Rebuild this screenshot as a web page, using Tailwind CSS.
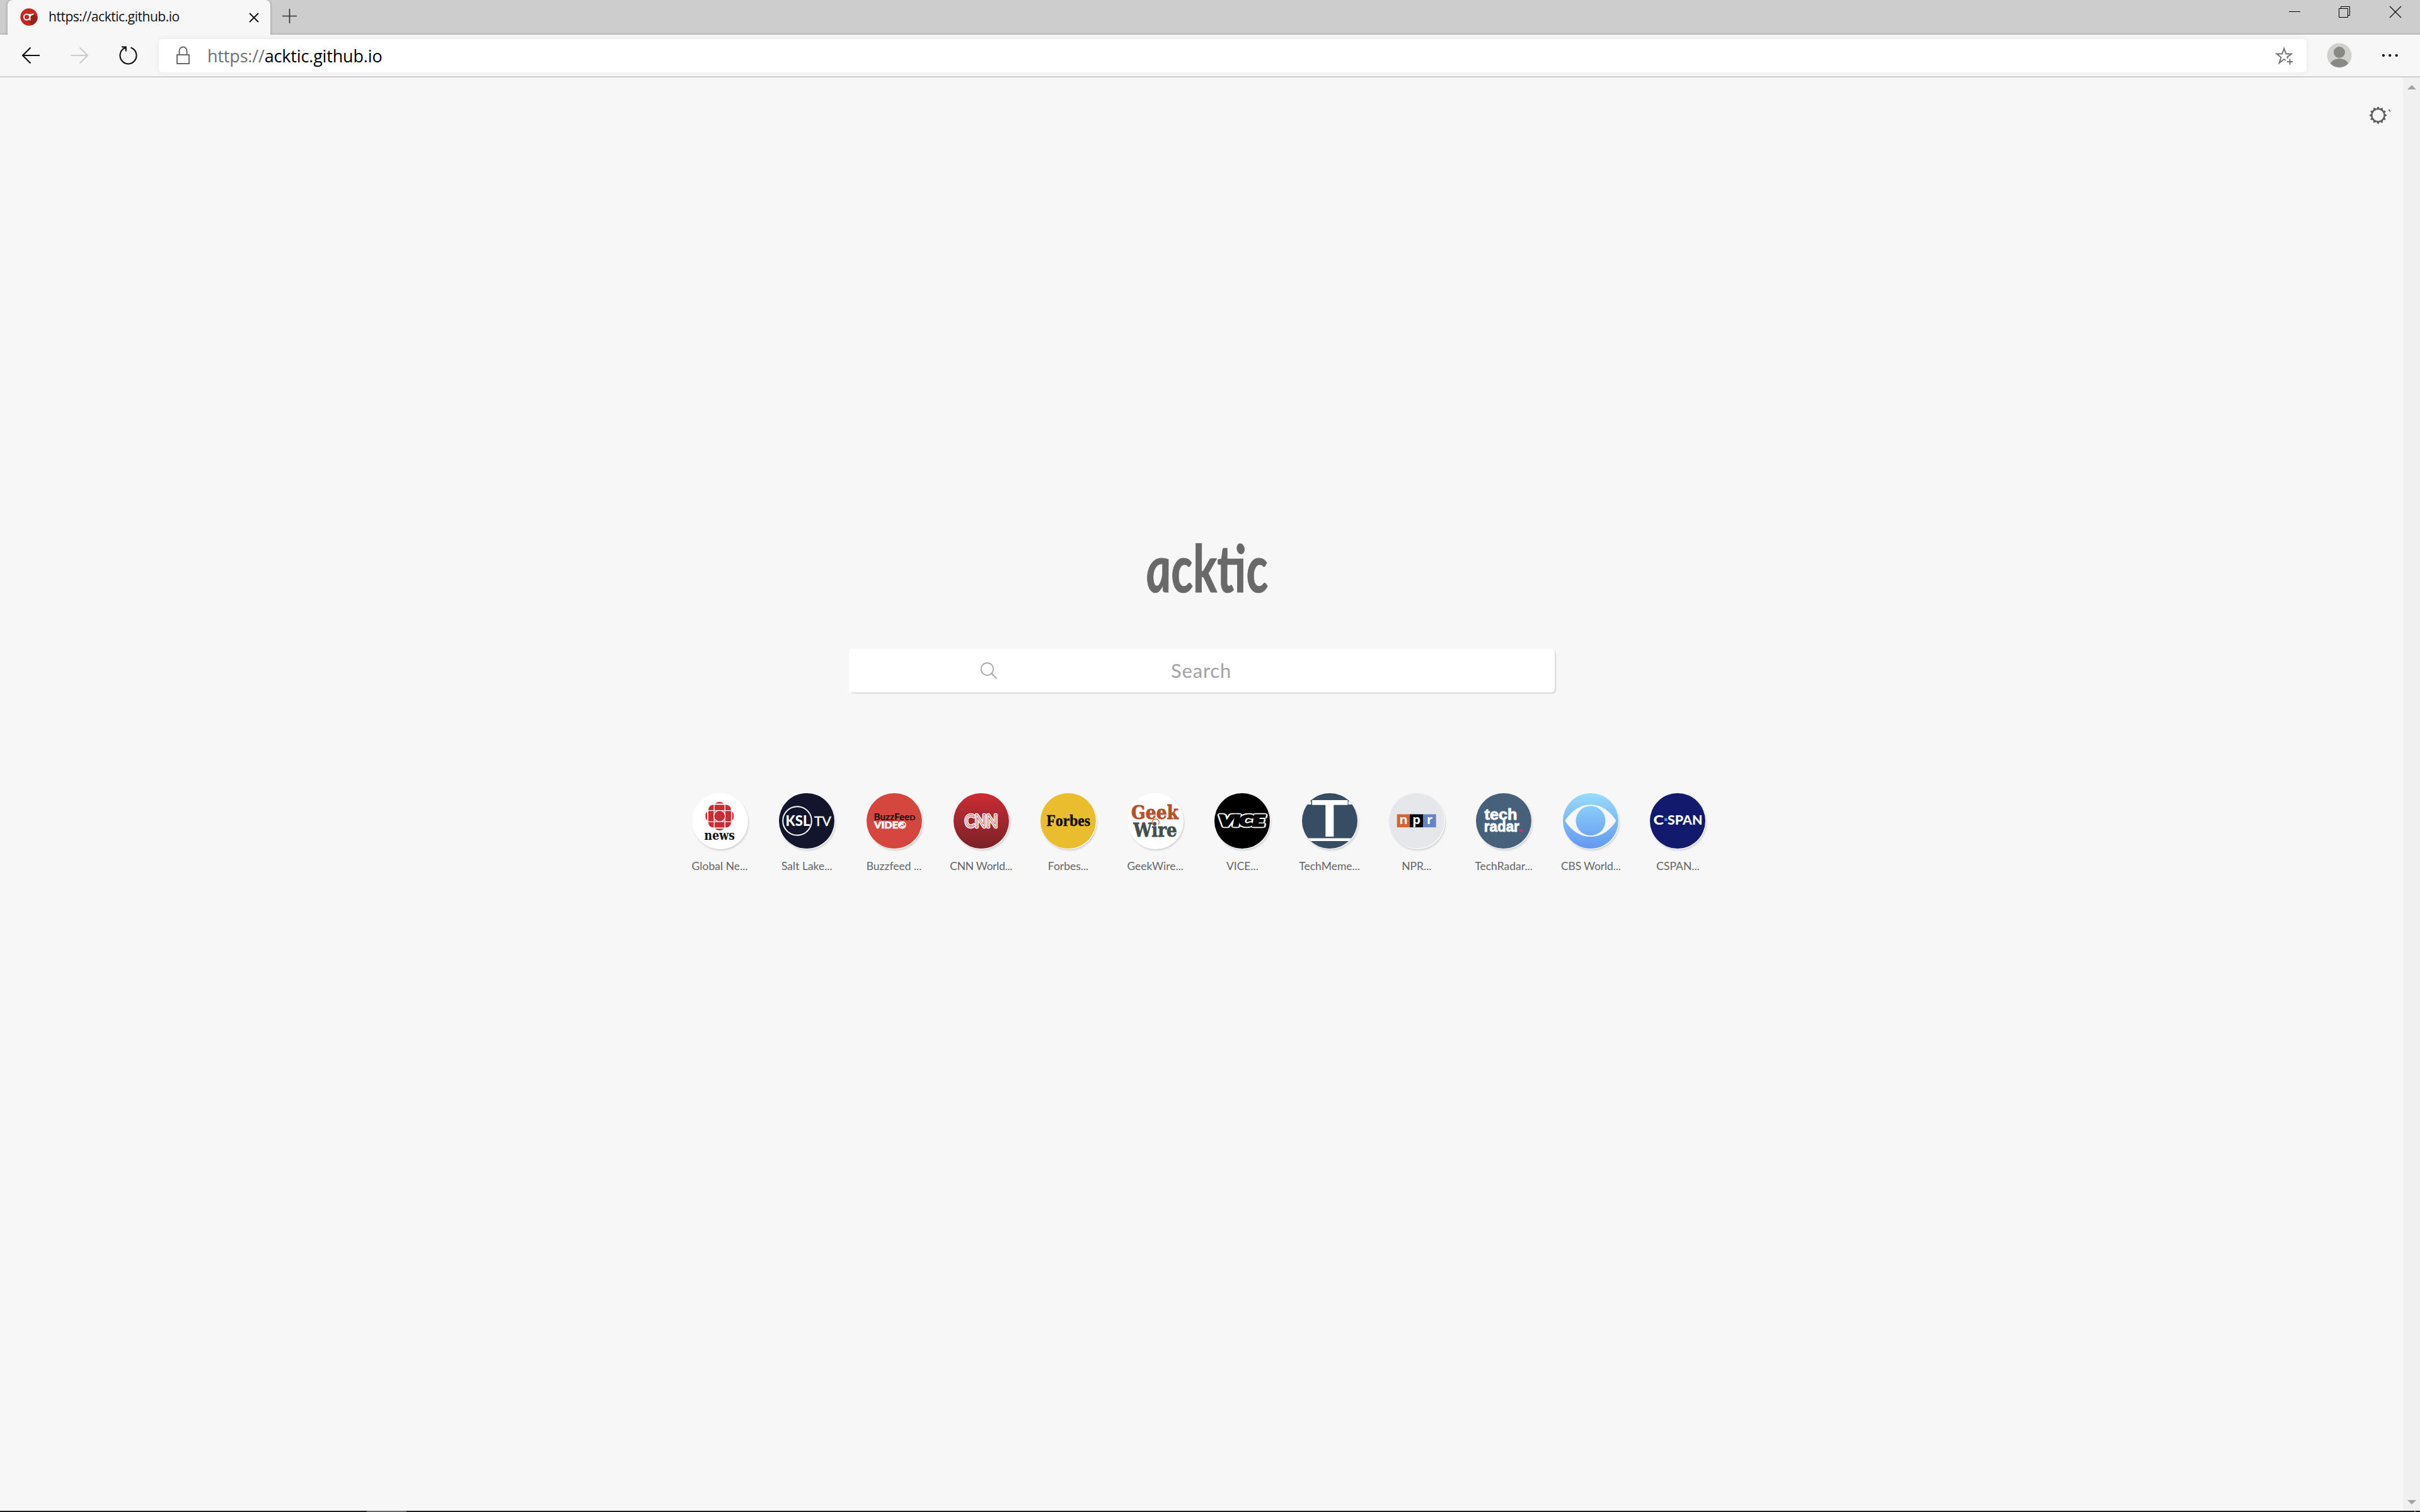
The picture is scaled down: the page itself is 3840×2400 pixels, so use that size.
<!DOCTYPE html>
<html lang="en">
<head>
<meta charset="utf-8">
<title>https://acktic.github.io</title>
<script src="https://cdn.jsdelivr.net/npm/@tailwindcss/browser@4"></script>
</head>
<body class="w-[3840px] h-[2400px] overflow-hidden bg-[#f7f7f7] flex flex-col font-['Open_Sans',sans-serif]">
<!-- tab strip -->
<header class="relative h-[55px] shrink-0 bg-[#cdcdcd] flex items-start shadow-[inset_0_-3px_2px_-1px_#b9b9b9]">
  <div class="ml-3 w-[417px] h-[55px] bg-[#f7f7f7] rounded-t-lg flex items-center pl-5 pr-[17px] shadow-[0_0_4px_rgba(0,0,0,.3)]">
    <svg class="size-7 shrink-0 -mt-px" viewBox="0 0 28 28"><defs><clipPath id="fc"><circle cx="14" cy="14" r="13.7"/></clipPath></defs><circle cx="14" cy="14" r="13.7" fill="#cb2722"/><path d="M10 18L22 9L30 17V30H22Z" fill="#96201d" clip-path="url(#fc)"/><g fill="none" stroke="#fff" stroke-width="2"><circle cx="10.500" cy="14" r="4.600"/><path d="M15.500 9V19.500M15.500 14Q16 9.500 21.500 9.500"/></g></svg>
    <span class="ml-[17px] -mt-[3px] text-[21px] leading-7 tracking-[-.47px] whitespace-nowrap text-[#111]">https://acktic.github.io</span>
    <svg class="ml-auto size-[18px] shrink-0" viewBox="0 0 18 18" stroke="#111" stroke-width="1.900"><path d="M2 2L16 16M16 2L2 16"/></svg>
  </div>
  <svg class="ml-[18px] mt-[13px] size-[25px]" viewBox="0 0 25 25" stroke="#333" stroke-width="1.700"><path d="M1 12.500H24M12.500 1V24"/></svg>
  <div class="ml-auto flex pt-[9px] pr-[29px]">
    <svg class="size-5 mr-[59px]" viewBox="0 0 20 20"><path d="M1 9.500H19" stroke="#000"/></svg>
    <svg class="size-5 mr-[61px]" viewBox="0 0 20 20" fill="none" stroke="#000"><path d="M1.500 4.500H15.500V18.500H1.500ZM4.500 4V1.500H18.500V15.500H16"/></svg>
    <svg class="size-5" viewBox="0 0 20 20" stroke="#000" stroke-width="1.100"><path d="M1 1L19 19M19 1L1 19"/></svg>
  </div>
</header>
<!-- navigation bar -->
<nav class="relative h-[68px] shrink-0 bg-[#f7f7f7] border-b-2 border-[#cfcfcf] flex items-center">
  <svg class="ml-[34px] w-[30px] h-[30px] -mt-px" viewBox="0 0 30 30" fill="none" stroke="#111" stroke-width="2.100"><path d="M29 15H2M14.500 2.500L2 15L14.500 27.500"/></svg>
  <svg class="ml-[47px] w-[30px] h-[30px] -mt-px" viewBox="0 0 30 30" fill="none" stroke="#ccc" stroke-width="2.100"><path d="M1 15H28M15.500 2.500L28 15L15.500 27.500"/></svg>
  <svg class="ml-[48px] w-[30px] h-[32px] -mt-px" viewBox="0 0 30 32" fill="none" stroke="#111" stroke-width="2.100"><path d="M18.500 3.500A13 13.300 0 1 1 10.500 3.500M4 2.500H10.800V9.500"/></svg>
  <div class="ml-[33px] w-[3408px] h-[53px] rounded-[6px] bg-white shadow-[0_0_10px_rgba(0,0,0,.07)] flex items-center">
    <svg class="ml-[27px] w-[23px] h-[30px]" viewBox="0 0 23 30" fill="none" stroke="#6b6b6b" stroke-width="2"><path d="M2 14H21V28H2ZM5.500 14V8A6 6.500 0 0 1 17.500 8V14"/></svg>
    <span class="ml-[27px] mt-[2px] text-[27px] leading-9 tracking-[-.17px] whitespace-nowrap text-black"><span class="text-[#707070]">https://</span>acktic.github.io</span>
    <svg class="ml-auto mr-[21px] size-[29px]" viewBox="0 0 29 29" fill="none" stroke="#757575" stroke-width="2"><path d="M17 22L14.300 20L6.700 26L9.500 17L2.500 11.500H11.300L14.300 3L17.300 11.500H26L19.500 16.500L20 19M19 24H28M23.500 19.500V28.500"/></svg>
  </div>
  <svg class="ml-8 size-10" viewBox="0 0 40 40"><defs><clipPath id="av"><circle cx="20" cy="20" r="19"/></clipPath></defs><circle cx="20" cy="20" r="19.500" fill="#d0d0cd"/><g fill="#888886" clip-path="url(#av)"><circle cx="20" cy="15" r="9"/><ellipse cx="20" cy="37" rx="15" ry="12"/></g></svg>
  <svg class="ml-[46px] w-7 h-3" viewBox="0 0 28 12"><circle cx="4" cy="6" r="2.100"/><circle cx="14.300" cy="6" r="2.100"/><circle cx="24.700" cy="6" r="2.100"/></svg>
</nav>
<!-- page -->
<div class="flex-1 min-h-0 flex">
  <main class="relative flex-1 flex flex-col">
    <button class="absolute right-[18px] top-[45px] flex">
      <svg class="w-[36px] h-[30px]" viewBox="0 0 36 30" fill="#5f5f5f"><path fill-rule="evenodd" d="M14.500 .8L17.300 4.500L21.600 2.700L22.300 7.200L26.800 7.900L25 12.200L28.700 15L25 17.800L26.800 22.100L22.300 22.800L21.600 27.300L17.300 25.500L14.500 29.200L11.700 25.500L7.400 27.300L6.700 22.800L2.200 22.100L4 17.800L.3 15L4 12.200L2.200 7.900L6.700 7.200L7.400 2.700L11.700 4.500ZM14.500 6A9 9 0 1 0 14.500 24A9 9 0 1 0 14.500 6Z"/><path d="M30 6H33L34.500 10.500Z"/></svg>
    </button>
    <h1 class="mt-[733px] ml-[1803px]"><svg class="w-[226px] h-[96px] overflow-visible" viewBox="0 0 226 96"><text transform="translate(18 84) skewX(5)" x="0" y="0" textLength="194" lengthAdjust="spacingAndGlyphs" font-family="Lato" font-weight="700" font-style="italic" font-size="104" fill="#696969" stroke="#696969" stroke-width="1">acktic</text></svg></h1>
    <div class="ml-[1347px] mt-[78px] w-[1120px] h-[69px] bg-white rounded-[6px] shadow-[2px_2px_2px_rgba(0,0,0,.12)] flex items-center font-['Lato',sans-serif]">
      <svg class="ml-[208px] -mt-[2px] w-[28px] h-[28px]" viewBox="0 0 28 28" fill="none" stroke="#aaa" stroke-width="1.900"><circle cx="11.500" cy="12" r="9.700"/><path d="M18.500 19.500L26.500 27" stroke-width="2.300"/></svg>
      <span class="ml-[275px] -mt-[2px] text-[31px] tracking-[.8px] leading-9 text-[#a3a3a3]">Search</span>
    </div>
    <ul class="ml-[1073px] mt-[160px] w-[1658.600px] grid grid-cols-12 font-['Lato',sans-serif] text-[17.500px] leading-6 text-[#666]">
      <li class="flex flex-col items-center gap-[16px]">
        <svg class="size-[88px] rounded-full bg-white shadow-[1px_1px_0_#fff,2px_3px_3px_rgba(0,0,0,.16)]" viewBox="0 0 88 88"><g fill="#c92c33"><rect x="26" y="18.500" width="36" height="36" rx="8"/><path d="M37 16.500A7.200 4 0 0 1 50.500 16.500ZM37 56.300A7.200 4 0 0 0 50.500 56.300ZM24 29.500A4 7.200 0 0 0 24 43ZM63.700 29.500A4 7.200 0 0 1 63.700 43Z"/></g><path d="M35.200 18V55M52.300 18V55M25 27.600H63M25 45.300H63" stroke="#fff" stroke-width="1.300"/><circle cx="43.800" cy="36.400" r="9" fill="#c92c33" stroke="#fff" stroke-width="1.200"/><text x="19.500" y="74" textLength="48.500" lengthAdjust="spacingAndGlyphs" font-family="DejaVu Serif" font-weight="700" font-size="20" fill="#111">news</text></svg>
        <span class="tracking-[.05px]">Global Ne...</span></li>
      <li class="flex flex-col items-center gap-[16px]">
        <svg class="size-[88px] rounded-full bg-[#13152c] shadow-[1px_1px_0_#fff,2px_3px_3px_rgba(0,0,0,.16)]" viewBox="0 0 88 88" fill="#fff"><circle cx="29" cy="44" r="22.800" fill="none" stroke="#fff" stroke-width="2"/><text x="10.500" y="52" textLength="39" lengthAdjust="spacingAndGlyphs" font-family="Lato" font-weight="900" font-size="22">KSL</text><text x="56" y="52" textLength="27" lengthAdjust="spacingAndGlyphs" font-family="Lato" font-size="22" stroke="#fff" stroke-width=".4">TV</text></svg>
        <span>Salt Lake...</span></li>
      <li class="flex flex-col items-center gap-[16px]">
        <svg class="size-[88px] rounded-full bg-[#d5463f] shadow-[1px_1px_0_#fff,2px_3px_3px_rgba(0,0,0,.16)]" viewBox="0 0 88 88" font-family="Lato" font-weight="900"><text x="11.500" y="43" textLength="66" lengthAdjust="spacingAndGlyphs" font-size="15" fill="#171717">BuzzFee<tspan font-size="12">D</tspan></text><text x="12" y="56" textLength="51" lengthAdjust="spacingAndGlyphs" font-size="15.500" fill="#fff" stroke="#fff" stroke-width=".7">VIDEO</text><circle cx="57" cy="50.500" r="5" fill="#fff"/><path d="M53.500 53.500L56 50.500L57.500 52L60 48.500M57.500 48H60.500V51" stroke="#d5463f" stroke-width="1.200" fill="none"/></svg>
        <span>Buzzfeed ...</span></li>
      <li class="flex flex-col items-center gap-[16px]">
        <svg class="size-[88px] rounded-full bg-linear-to-b from-[#cd2c33] to-[#7a2027] shadow-[1px_1px_0_#fff,2px_3px_3px_rgba(0,0,0,.16)]" viewBox="0 0 88 88" font-family="Lato" font-weight="400" font-size="27"><text x="18" y="54" textLength="52" lengthAdjust="spacingAndGlyphs" fill="#fff" stroke="#fff" stroke-width="4.500" stroke-linejoin="round">CNN</text><text x="18" y="54" textLength="52" lengthAdjust="spacingAndGlyphs" fill="none" stroke="#b2282f" stroke-width=".8">CNN</text></svg>
        <span class="tracking-[-.3px]">CNN World...</span></li>
      <li class="flex flex-col items-center gap-[16px]">
        <svg class="size-[88px] rounded-full bg-[#eabd2e] shadow-[1px_1px_0_#fff,2px_3px_3px_rgba(0,0,0,.16)]" viewBox="0 0 88 88"><text x="9.500" y="52" textLength="69.500" lengthAdjust="spacingAndGlyphs" font-family="Liberation Serif" font-weight="700" font-size="25" fill="#0a0a00" stroke="#0a0a00" stroke-width=".4">Forbes</text></svg>
        <span>Forbes...</span></li>
      <li class="flex flex-col items-center gap-[16px]">
        <svg class="size-[88px] rounded-full bg-white shadow-[1px_1px_0_#fff,2px_3px_3px_rgba(0,0,0,.16)]" viewBox="0 0 88 88" font-family="DejaVu Serif" font-weight="700"><text x="6" y="41" textLength="75" lengthAdjust="spacingAndGlyphs" font-size="30" fill="#b5502a" stroke="#b5502a" stroke-width=".9">Geek</text><text x="9.500" y="68.500" textLength="69" lengthAdjust="spacingAndGlyphs" font-size="30" fill="#45504c" stroke="#45504c" stroke-width=".9">Wire</text><path d="M40.500 50A5.500 5.500 0 1 1 49 50" fill="none" stroke="#c9573a" stroke-width="1.300"/></svg>
        <span>GeekWire...</span></li>
      <li class="flex flex-col items-center gap-[16px]">
        <svg class="size-[88px] rounded-full bg-black shadow-[1px_1px_0_#fff,2px_3px_3px_rgba(0,0,0,.16)]" viewBox="0 0 88 88"><g font-family="Lato" font-weight="900" font-style="italic" font-size="23"><text x="8" y="52" textLength="71" lengthAdjust="spacingAndGlyphs" fill="#fff" stroke="#fff" stroke-width="6.500" stroke-linejoin="round">VICE</text><text x="8" y="52" textLength="71" lengthAdjust="spacingAndGlyphs" fill="#000" stroke="#000" stroke-width="3">VICE</text></g></svg>
        <span>VICE...</span></li>
      <li class="flex flex-col items-center gap-[16px]">
        <svg class="size-[88px] rounded-full bg-[#364d63] shadow-[1px_1px_0_#fff,2px_3px_3px_rgba(0,0,0,.16)]" viewBox="0 0 88 88" fill="#fff"><rect y="13" width="88" height="5"/><rect x="14.500" y="10" width="59" height="10" fill="#364d63"/><rect x="16" y="11" width="56.500" height="7.700"/><rect x="37.300" y="18" width="13" height="51"/><rect y="71.500" width="88" height="4.500"/></svg>
        <span>TechMeme...</span></li>
      <li class="flex flex-col items-center gap-[16px]">
        <svg class="size-[88px] rounded-full bg-[#e5e7ea] shadow-[1px_1px_0_#fff,2px_3px_3px_rgba(0,0,0,.16)]" viewBox="0 0 88 88" font-family="Open Sans" font-weight="700" font-size="20"><rect x="12.700" y="33.500" width="20.500" height="20.700" fill="#d4652d"/><rect x="33" y="33.500" width="21" height="20.700" fill="#04040f"/><rect x="54" y="33.500" width="20.700" height="20.700" fill="#6684c4"/><g fill="#fff" text-anchor="middle"><text x="23" y="49">n</text><text x="43.700" y="49">p</text><text x="64.500" y="49">r</text></g></svg>
        <span>NPR...</span></li>
      <li class="flex flex-col items-center gap-[16px]">
        <svg class="size-[88px] rounded-full bg-[#48617b] shadow-[1px_1px_0_#fff,2px_3px_3px_rgba(0,0,0,.16)]" viewBox="0 0 88 88" font-family="Liberation Sans" font-weight="700" font-size="23.500" fill="#fff"><text x="13.500" y="42" textLength="52" lengthAdjust="spacingAndGlyphs" stroke="#fff" stroke-width=".9">tech</text><text x="12.800" y="61" textLength="56" lengthAdjust="spacingAndGlyphs" stroke="#fff" stroke-width=".9">radar</text><rect x="68.800" y="56.700" width="5" height="5" fill="#d52a80"/></svg>
        <span>TechRadar...</span></li>
      <li class="flex flex-col items-center gap-[16px]">
        <svg class="size-[88px] rounded-full bg-linear-to-b from-[#98dcfc] to-[#6497f0] shadow-[1px_1px_0_#fff,2px_3px_3px_rgba(0,0,0,.16)]" viewBox="0 0 88 88"><path fill="#f7f7f7" fill-rule="evenodd" d="M3.300 43.700C14 27 28 18.300 44 18.300S74 27 84.500 43.700C74 60.500 60 69 44 69S14 60.500 3.300 43.700ZM44 20.300A23.500 23.500 0 1 0 44 67.300A23.500 23.500 0 1 0 44 20.300Z"/></svg>
        <span class="tracking-[-.15px]">CBS World...</span></li>
      <li class="flex flex-col items-center gap-[16px]">
        <svg class="size-[88px] rounded-full bg-[#111a6d] shadow-[1px_1px_0_#fff,2px_3px_3px_rgba(0,0,0,.16)]" viewBox="0 0 88 88" font-family="Lato" font-weight="900" font-size="21.500" fill="#fff"><text x="5.500" y="50" textLength="16.500" lengthAdjust="spacingAndGlyphs">C</text><rect x="23" y="39.700" width="4.500" height="4.500" fill="#4b97d8"/><text x="28" y="50" textLength="55.500" lengthAdjust="spacingAndGlyphs">SPAN</text></svg>
        <span>CSPAN...</span></li>
    </ul>
  </main>
  <aside class="w-[27px] bg-[#f0f0f0] flex flex-col items-center justify-between pt-3 pb-[10px] pl-px">
    <svg class="w-[14px] h-[7px]" viewBox="0 0 14 7" fill="#a3a3a3"><path d="M0 7L7 0L14 7Z"/></svg>
    <svg class="w-[14px] h-[7px]" viewBox="0 0 14 7" fill="#a3a3a3"><path d="M0 0L7 7L14 0Z"/></svg>
  </aside>
</div>
<footer class="h-[2px] shrink-0 bg-[#1f1d1f] flex justify-between"><div class="ml-[582px] w-[63px] bg-[#666]"></div><div class="mr-[7px] w-[2px] bg-[#777]"></div></footer>
</body>
</html>
